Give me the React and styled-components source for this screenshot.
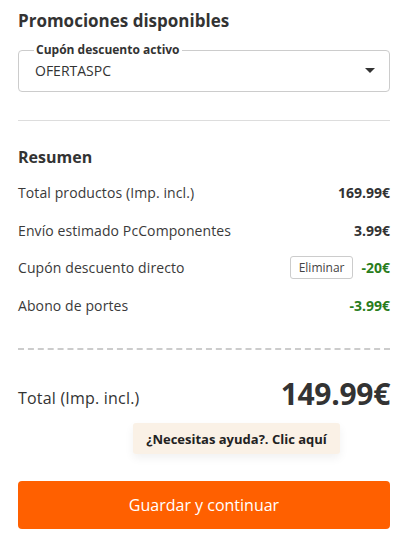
import React from "react";
import styled, { createGlobalStyle } from "styled-components";

const GlobalStyle = createGlobalStyle`
  body {
    margin: 0;
    background: #fff;
    font-family: "Open Sans", "Noto Sans", sans-serif;
    color: #333;
  }
`;

const Page = styled.div`
  width: 401px;
  padding: 9px 11px 0 18px;
  box-sizing: border-box;
`;

const Title = styled.h2`
  margin: 0;
  font-size: 17px;
  font-weight: 700;
  line-height: 24px;
  color: #333;
`;

const Field = styled.fieldset`
  margin: 11px 0 0 0;
  padding: 0 14px 0 16px;
  height: 48px;
  box-sizing: border-box;
  border: 1px solid #ccc;
  border-radius: 4px;
  display: flex;
  align-items: center;
  justify-content: space-between;

  legend {
    padding: 0 2px;
    margin-left: -1px;
    font-size: 12px;
    font-weight: 700;
    line-height: 12px;
    color: #333;
  }
`;

const FieldValue = styled.span`
  font-size: 14px;
  color: #333;
  margin-top: -6px;
`;

const Caret = styled.span`
  width: 0;
  height: 0;
  border-left: 5px solid transparent;
  border-right: 5px solid transparent;
  border-top: 5px solid #333;
  margin-top: -6px;
`;

const Divider = styled.hr`
  margin: 28px 0 0 0;
  border: 0;
  border-top: 1px solid #ddd;
`;

const Section = styled.h3`
  margin: 25px 0 0 0;
  font-size: 16px;
  font-weight: 700;
  line-height: 22px;
  color: #333;
`;

const Rows = styled.div`
  margin-top: 6px;
  display: flex;
  flex-direction: column;
`;

const Row = styled.div`
  display: flex;
  align-items: center;
  justify-content: space-between;
  height: 37.5px;
  font-size: 14px;
  letter-spacing: 0.1px;
  color: #3a3a3a;
`;

const RowRight = styled.div`
  display: flex;
  align-items: center;
  gap: 8px;
`;

const Amount = styled.span`
  font-weight: 700;
  font-size: 14px;
  letter-spacing: 0;
  color: ${(p) => (p.$green ? "#2a7d1c" : "#333")};
`;

const SmallBtn = styled.button`
  font-family: inherit;
  font-size: 12px;
  color: #444;
  background: #fff;
  border: 1px solid #ccc;
  border-radius: 3px;
  height: 23px;
  padding: 0 8px;
`;

const Dashed = styled.hr`
  margin: 24px 0 0 0;
  border: 0;
  border-top: 2px dashed #ccc;
`;

const TotalRow = styled.div`
  margin-top: 23px;
  display: flex;
  align-items: center;
  justify-content: space-between;
`;

const TotalLabel = styled.span`
  font-size: 16px;
  letter-spacing: 0.2px;
  color: #333;
  margin-top: 8px;
`;

const TotalPrice = styled.span`
  font-size: 30px;
  font-weight: 700;
  color: #333;
  letter-spacing: -0.3px;
`;

const HelpWrap = styled.div`
  display: flex;
  justify-content: center;
  margin-top: 9px;
`;

const Help = styled.div`
  background: #faf1e6;
  border-radius: 3px;
  padding: 0 13px;
  height: 31px;
  display: flex;
  align-items: center;
  font-size: 13px;
  font-weight: 700;
  color: #222;
  box-shadow: 0 4px 10px rgba(0, 0, 0, 0.06);
  margin-left: 65px;
`;

const MainBtn = styled.button`
  margin-top: 27px;
  width: 100%;
  height: 48px;
  border: 0;
  border-radius: 4px;
  background: #ff6000;
  color: #fff;
  font-family: inherit;
  font-size: 16px;
  font-weight: 500;
`;

export default function App() {
  return (
    <>
      <GlobalStyle />
      <Page>
        <Title>Promociones disponibles</Title>
        <Field>
          <legend>Cupón descuento activo</legend>
          <FieldValue>OFERTASPC</FieldValue>
          <Caret />
        </Field>
        <Divider />
        <Section>Resumen</Section>
        <Rows>
          <Row>
            <span>Total productos (Imp. incl.)</span>
            <Amount>169.99€</Amount>
          </Row>
          <Row>
            <span>Envío estimado PcComponentes</span>
            <Amount>3.99€</Amount>
          </Row>
          <Row>
            <span>Cupón descuento directo</span>
            <RowRight>
              <SmallBtn>Eliminar</SmallBtn>
              <Amount $green>-20€</Amount>
            </RowRight>
          </Row>
          <Row>
            <span>Abono de portes</span>
            <Amount $green>-3.99€</Amount>
          </Row>
        </Rows>
        <Dashed />
        <TotalRow>
          <TotalLabel>Total (Imp. incl.)</TotalLabel>
          <TotalPrice>149.99€</TotalPrice>
        </TotalRow>
        <HelpWrap>
          <Help>¿Necesitas ayuda?. Clic aquí</Help>
        </HelpWrap>
        <MainBtn>Guardar y continuar</MainBtn>
      </Page>
    </>
  );
}
